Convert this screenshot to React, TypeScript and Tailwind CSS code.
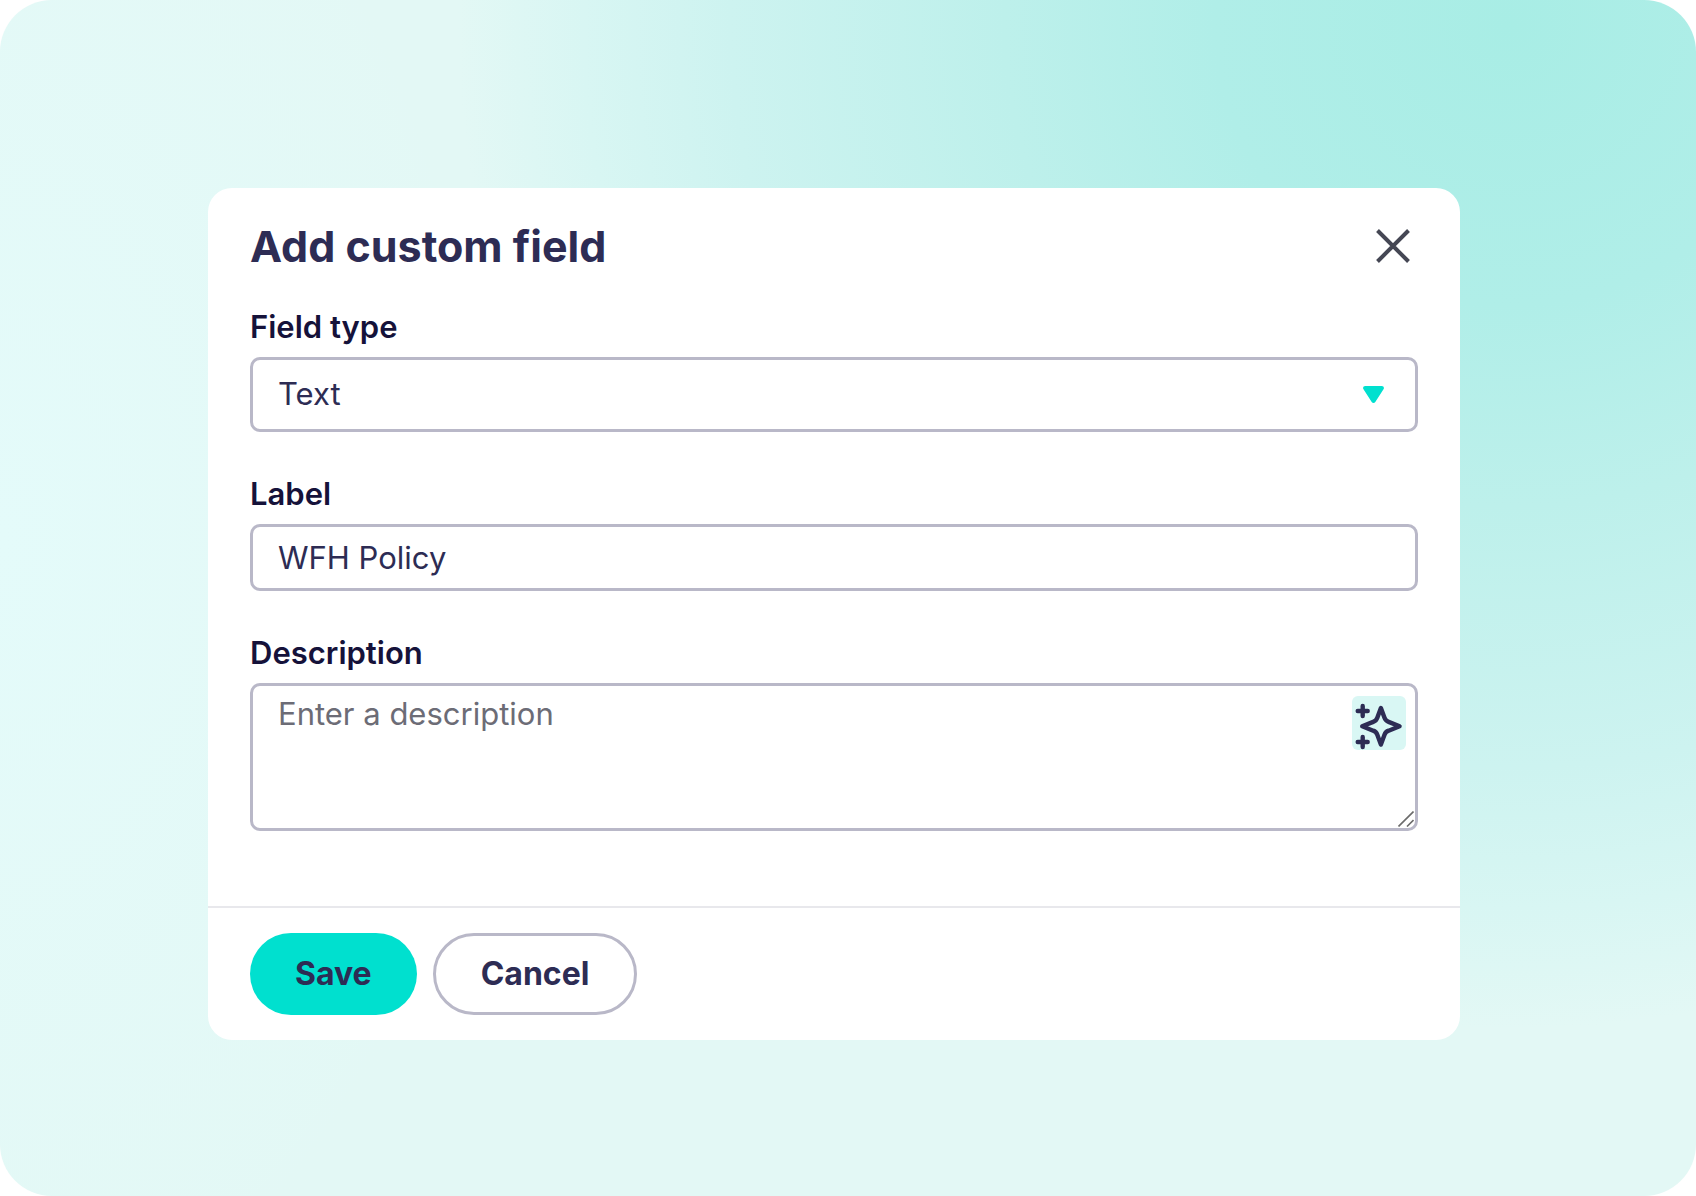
import type { ReactNode } from "react";

interface FieldProps {
  id: string;
  label: string;
  children: ReactNode;
}

const controlClass =
  "block w-full rounded-[10px] border-3 border-[#b9b8c8] bg-white px-[25px] text-[31px] text-[#2d2c54] outline-none";

function Field({ id, label, children }: FieldProps) {
  return (
    <div>
      <label
        htmlFor={id}
        className="mb-2.5 block text-[31px] leading-10 font-semibold text-[#15123a]"
      >
        {label}
      </label>
      {children}
    </div>
  );
}

function CloseIcon() {
  return (
    <svg viewBox="0 0 34 34" className="size-[34px]" fill="none" stroke="#454754" strokeWidth="4">
      <path d="M1.5 1.5l31 31M32.5 1.5l-31 31" />
    </svg>
  );
}

function CaretIcon() {
  return (
    <svg
      viewBox="0 0 21 17"
      className="pointer-events-none absolute top-[29px] right-[34px] h-[17px] w-[21px]"
      fill="#00e0cf"
    >
      <path d="M2.2 0h16.6c1.8 0 2.7 1.8 1.7 3.2l-8.2 12.8c-.9 1.3-2.7 1.3-3.6 0L.5 3.2C-.5 1.8.4 0 2.2 0z" />
    </svg>
  );
}

function SparkleIcon() {
  return (
    <svg
      viewBox="0 0 54 54"
      className="size-[54px]"
      fill="none"
      stroke="#2d2c54"
      strokeWidth="4.4"
      strokeLinecap="round"
      strokeLinejoin="round"
    >
      <path d="M28.9 12l3.6 9.8c.7 2 2.1 3.4 4.1 4.1l11 4.4-11 4.4c-2 .7-3.4 2.1-4.1 4.1l-3.6 9.8-3.6-9.8c-.7-2-2.1-3.400-4.1-4.1l-11-4.4 11-4.4c2-.7 3.4-2.1 4.1-4.1z" />
      <path d="M10.700 10v10M5.700 15h10M10.700 41v10M5.700 46h10" />
    </svg>
  );
}

function ResizeGrip() {
  return (
    <svg
      viewBox="0 0 16 16"
      className="pointer-events-none absolute right-1 bottom-1 size-4"
      fill="none"
      stroke="#6b6b6b"
      strokeWidth="1.6"
    >
      <path d="M.5 15.5l15-15M9 15.5L15.5 9" />
    </svg>
  );
}

export default function App() {
  return (
    <main className="min-h-screen rounded-[52px] bg-[#e3f8f5] bg-[radial-gradient(ellipse_62%_84%_at_89%_2%,#a8ede5_0%,#b0eee8_28%,#bdf0eb_48%,#cdf3f0_74%,#d8f6f3_88%,#e3f8f500_100%),radial-gradient(ellipse_30%_70%_at_0%_45%,#e4fbfa_0%,#e4fbfa00_100%)] pt-[188px] pr-[236px] pb-[156px] pl-[208px] font-['Inter',sans-serif]">
      <form className="rounded-3xl bg-white" onSubmit={(e) => e.preventDefault()}>
        <div className="px-[42px] pt-[33px] pb-[75px]">
          <header className="mb-9 flex items-center justify-between pr-2">
            <h1 className="text-[43px] leading-[50px] font-bold text-[#2d2c54]">
              Add custom field
            </h1>
            <button type="button" aria-label="Close">
              <CloseIcon />
            </button>
          </header>

          <div className="space-y-[42px]">
            <Field id="field-type" label="Field type">
              <div className="relative">
                <select
                  id="field-type"
                  className={`${controlClass} h-[75px] appearance-none`}
                  defaultValue="Text"
                >
                  <option>Text</option>
                </select>
                <CaretIcon />
              </div>
            </Field>

            <Field id="field-label" label="Label">
              <input
                id="field-label"
                type="text"
                defaultValue="WFH Policy"
                className={`${controlClass} h-[67px]`}
              />
            </Field>

            <Field id="field-description" label="Description">
              <div className="relative">
                <textarea
                  id="field-description"
                  placeholder="Enter a description"
                  className={`${controlClass} h-[148px] resize-none py-2 leading-10 placeholder:text-[#6c6c76]`}
                />
                <button
                  type="button"
                  aria-label="Write with AI"
                  className="absolute top-[13px] right-3 rounded-md bg-[#d9f7f4]"
                >
                  <SparkleIcon />
                </button>
                <ResizeGrip />
              </div>
            </Field>
          </div>
        </div>

        <footer className="flex gap-4 border-t-2 border-[#e8e8ec] px-[42px] py-[25px]">
          <button
            type="submit"
            className="h-[82px] rounded-full bg-[#00e0cf] px-[45px] text-[32px] font-bold text-[#2d2c54]"
          >
            Save
          </button>
          <button
            type="button"
            className="h-[82px] rounded-full border-3 border-[#b9b8c8] px-[45px] text-[32px] font-bold text-[#2d2c54]"
          >
            Cancel
          </button>
        </footer>
      </form>
    </main>
  );
}
